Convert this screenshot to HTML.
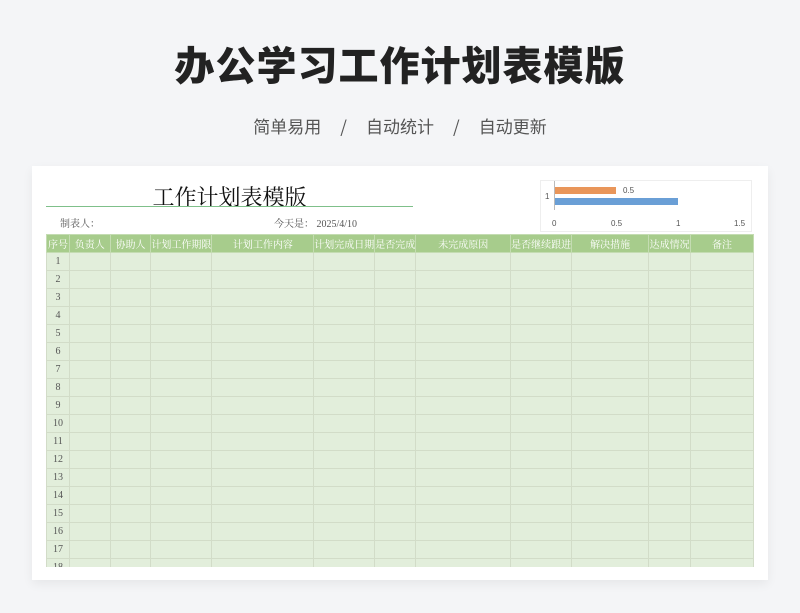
<!DOCTYPE html><html><head><meta charset="utf-8"><style>
body{margin:0;width:800px;height:613px;background:#f4f5f7;font-family:"Liberation Sans","Noto Sans CJK SC",sans-serif;position:relative;overflow:hidden}
.a{position:absolute}
h1{position:absolute;top:34px;left:0;width:800px;text-align:center;margin:0;font-size:40px;font-weight:900;color:#222;font-family:"Noto Sans CJK SC",sans-serif;letter-spacing:1px}
.sub{top:113px;left:0;width:800px;text-align:center;font-size:17px;color:#555;font-family:"Noto Sans CJK SC",sans-serif}
.card{left:32px;top:166px;width:736px;height:414px;background:#fff;box-shadow:0 4px 10px rgba(0,0,0,.06)}
.serif{font-family:"Liberation Serif","Noto Serif CJK SC",serif}
table{border-collapse:collapse;table-layout:fixed;position:absolute;left:46px;top:234px}
td{border:1px solid #d2dcc8;height:17px;padding:0;font-size:10px;color:#555;text-align:center;font-family:"Liberation Serif","Noto Serif CJK SC",serif;background:#e2eedb;overflow:hidden;white-space:nowrap}
tr.h td{background:#a7cc8c;color:#fff;border-color:#c4dcb2}
</style></head><body>
<h1>办公学习工作计划表模版</h1>
<div class="a sub">简单易用&nbsp;&nbsp;&nbsp;&nbsp;&nbsp;/&nbsp;&nbsp;&nbsp;&nbsp;&nbsp;自动统计&nbsp;&nbsp;&nbsp;&nbsp;&nbsp;/&nbsp;&nbsp;&nbsp;&nbsp;&nbsp;自动更新</div>
<div class="a card"></div>
<div class="a serif" style="left:46px;top:181px;width:367px;text-align:center;font-size:22px;color:#111">工作计划表模版</div>
<div class="a" style="left:46px;top:206px;width:367px;height:1px;background:#7fc08a"></div>
<div class="a serif" style="left:60px;top:215px;font-size:10px;color:#555">制表人：</div>
<div class="a serif" style="left:274px;top:215px;font-size:10px;color:#555">今天是：&nbsp;2025/4/10</div>
<div class="a" style="left:540px;top:180px;width:212px;height:52px;border:1px solid #eee;box-sizing:border-box"></div>
<div class="a" style="left:554px;top:181px;width:1px;height:29px;background:#bbb"></div>
<div class="a" style="left:555px;top:187px;width:61px;height:7px;background:#e9965a"></div>
<div class="a" style="left:555px;top:198px;width:123px;height:7px;background:#6a9fd6"></div>
<div class="a" style="left:623px;top:186px;font-size:8px;color:#555">0.5</div>
<div class="a" style="left:545px;top:192px;font-size:8px;color:#555">1</div>
<div class="a" style="left:552px;top:219px;font-size:8px;color:#555">0</div>
<div class="a" style="left:611px;top:219px;font-size:8px;color:#555">0.5</div>
<div class="a" style="left:676px;top:219px;font-size:8px;color:#555">1</div>
<div class="a" style="left:734px;top:219px;font-size:8px;color:#555">1.5</div>
<div class="a" style="left:46px;top:234px;width:708px;height:333px;overflow:hidden">
<table style="left:0;top:0">
<colgroup><col style="width:23px"><col style="width:41px"><col style="width:41px"><col style="width:59px"><col style="width:103px"><col style="width:59px"><col style="width:41px"><col style="width:96px"><col style="width:60px"><col style="width:78px"><col style="width:42px"><col style="width:64px"></colgroup>
<tr class="h"><td>序号</td><td>负责人</td><td>协助人</td><td>计划工作期限</td><td>计划工作内容</td><td>计划完成日期</td><td>是否完成</td><td>未完成原因</td><td>是否继续跟进</td><td>解决措施</td><td>达成情况</td><td>备注</td></tr>
<tr><td>1</td><td></td><td></td><td></td><td></td><td></td><td></td><td></td><td></td><td></td><td></td><td></td></tr>
<tr><td>2</td><td></td><td></td><td></td><td></td><td></td><td></td><td></td><td></td><td></td><td></td><td></td></tr>
<tr><td>3</td><td></td><td></td><td></td><td></td><td></td><td></td><td></td><td></td><td></td><td></td><td></td></tr>
<tr><td>4</td><td></td><td></td><td></td><td></td><td></td><td></td><td></td><td></td><td></td><td></td><td></td></tr>
<tr><td>5</td><td></td><td></td><td></td><td></td><td></td><td></td><td></td><td></td><td></td><td></td><td></td></tr>
<tr><td>6</td><td></td><td></td><td></td><td></td><td></td><td></td><td></td><td></td><td></td><td></td><td></td></tr>
<tr><td>7</td><td></td><td></td><td></td><td></td><td></td><td></td><td></td><td></td><td></td><td></td><td></td></tr>
<tr><td>8</td><td></td><td></td><td></td><td></td><td></td><td></td><td></td><td></td><td></td><td></td><td></td></tr>
<tr><td>9</td><td></td><td></td><td></td><td></td><td></td><td></td><td></td><td></td><td></td><td></td><td></td></tr>
<tr><td>10</td><td></td><td></td><td></td><td></td><td></td><td></td><td></td><td></td><td></td><td></td><td></td></tr>
<tr><td>11</td><td></td><td></td><td></td><td></td><td></td><td></td><td></td><td></td><td></td><td></td><td></td></tr>
<tr><td>12</td><td></td><td></td><td></td><td></td><td></td><td></td><td></td><td></td><td></td><td></td><td></td></tr>
<tr><td>13</td><td></td><td></td><td></td><td></td><td></td><td></td><td></td><td></td><td></td><td></td><td></td></tr>
<tr><td>14</td><td></td><td></td><td></td><td></td><td></td><td></td><td></td><td></td><td></td><td></td><td></td></tr>
<tr><td>15</td><td></td><td></td><td></td><td></td><td></td><td></td><td></td><td></td><td></td><td></td><td></td></tr>
<tr><td>16</td><td></td><td></td><td></td><td></td><td></td><td></td><td></td><td></td><td></td><td></td><td></td></tr>
<tr><td>17</td><td></td><td></td><td></td><td></td><td></td><td></td><td></td><td></td><td></td><td></td><td></td></tr>
<tr><td>18</td><td></td><td></td><td></td><td></td><td></td><td></td><td></td><td></td><td></td><td></td><td></td></tr>
</table></div>
</body></html>
